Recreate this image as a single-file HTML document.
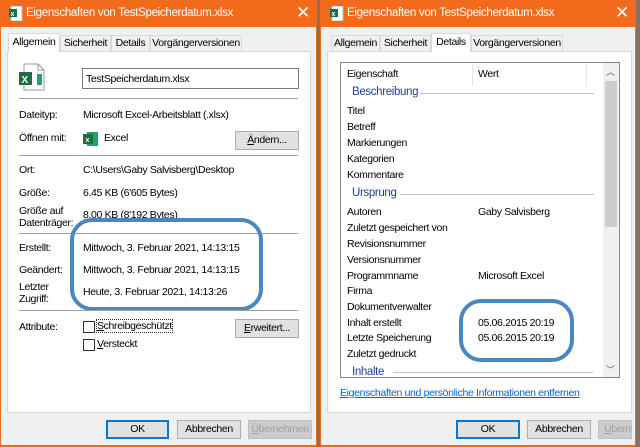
<!DOCTYPE html>
<html><head><meta charset="utf-8"><style>
*{margin:0;padding:0;box-sizing:border-box}
body{width:640px;height:447px;overflow:hidden;background:#8a7060;font-family:"Liberation Sans",sans-serif;font-size:10.5px;letter-spacing:-0.35px;color:#000;position:relative}
.a{position:absolute;white-space:nowrap}
.dlg{position:absolute;top:0;height:447px;background:#f0f0f0;border:1px solid #ef6a1c;border-top:none;border-bottom:2px solid #ef6a1c}
.title{position:absolute;left:-1px;right:-1px;top:0;height:27px;background:#f26b1d;color:#fff;font-size:11.5px;letter-spacing:-0.3px}
.panel{position:absolute;background:#fff;border:1px solid #d9d9d9}
.tab{position:absolute;top:35px;height:16px;background:#f0f0f0;border:1px solid #d9d9d9;border-bottom:none;text-align:center;line-height:15px}
.tab.sel{top:33px;height:19px;background:#fff;z-index:2;line-height:17px}
.btn{position:absolute;height:19px;background:#e1e1e1;border:1px solid #adadad;text-align:center;line-height:17px}
.btn.def{border:2px solid #0078d7;line-height:15px}
.btn.dis{color:#a0a0a0;background:#ccc;border-color:#bfbfbf}
.sep{position:absolute;height:1px;background:#a0a0a0}
.cb{position:absolute;width:12px;height:12px;border:1px solid #333;background:#fff}
.ring{position:absolute;border:4px solid #4a86c0;border-radius:22px}
.grp{color:#1e3f9b;font-size:11.5px}
.gl{position:absolute;height:1px;background:#b8c4dc}
</style></head><body>

<div class="dlg" style="left:0;width:317px">
 <div class="title">
  <svg class="a" style="left:9px;top:6px" width="14" height="15"><rect x="2" y="0" width="11" height="15" fill="#fff" stroke="#bbb"/><rect x="0" y="3" width="8" height="8" fill="#1d6f42"/><text x="1.5" y="10" font-size="7" fill="#fff" font-family="Liberation Sans" font-weight="bold">x</text></svg>
  <span class="a" style="left:26px;top:7px">Eigenschaften von TestSpeicherdatum.xlsx</span>
  <span class="a" style="left:296px;top:3px;font-size:17px">✕</span>
 </div>
 <div class="tab sel" style="left:7px;width:52px">Allgemein</div>
 <div class="tab" style="left:59px;width:51px">Sicherheit</div>
 <div class="tab" style="left:110px;width:39px">Details</div>
 <div class="tab" style="left:149px;width:92px">Vorgängerversionen</div>
 <div class="panel" style="left:6px;top:51px;width:304px;height:362px"></div>
</div>
<svg class="a" style="left:18px;top:63px" width="28" height="28"><path d="M6 1h14l6 6v20H6z" fill="#fff" stroke="#999"/><path d="M20 1v6h6" fill="none" stroke="#999"/><rect x="19" y="11" width="5" height="11" fill="#21a366"/><rect x="1" y="9" width="13" height="13" fill="#1d6f42"/><text x="3.5" y="20" font-size="10" fill="#fff" font-weight="bold" font-family="Liberation Sans">X</text></svg>
<div class="a" style="left:82px;top:68px;width:217px;height:21px;border:1px solid #7a7a7a;background:#fff;padding:4px 3px">TestSpeicherdatum.xlsx</div>
<div class="sep" style="left:19px;top:98px;width:279px"></div>
<span class="a" style="left:19px;top:109px">Dateityp:</span><span class="a" style="left:83px;top:109px">Microsoft Excel-Arbeitsblatt (.xlsx)</span>
<span class="a" style="left:19px;top:132px">Öffnen mit:</span>
<svg class="a" style="left:83px;top:131px" width="16" height="16"><rect x="4" y="1" width="11" height="14" fill="#21a366"/><rect x="0" y="3" width="10" height="10" fill="#1d6f42"/><text x="2.5" y="11" font-size="7" fill="#fff" font-weight="bold" font-family="Liberation Sans">x</text></svg>
<span class="a" style="left:104px;top:132px">Excel</span>
<div class="btn" style="left:235px;top:131px;width:64px"><u>Ä</u>ndern...</div>
<div class="sep" style="left:19px;top:155px;width:279px"></div>
<span class="a" style="left:19px;top:164px">Ort:</span><span class="a" style="left:83px;top:164px">C:\Users\Gaby Salvisberg\Desktop</span>
<span class="a" style="left:19px;top:187px">Größe:</span><span class="a" style="left:83px;top:187px">6.45 KB (6'605 Bytes)</span>
<span class="a" style="left:19px;top:205px;line-height:12px">Größe auf<br>Datenträger:</span><span class="a" style="left:83px;top:209px">8.00 KB (8'192 Bytes)</span>
<div class="sep" style="left:19px;top:233px;width:279px"></div>
<span class="a" style="left:19px;top:242px">Erstellt:</span><span class="a" style="left:83px;top:242px">Mittwoch, 3. Februar 2021, 14:13:15</span>
<span class="a" style="left:19px;top:264px">Geändert:</span><span class="a" style="left:83px;top:264px">Mittwoch, 3. Februar 2021, 14:13:15</span>
<span class="a" style="left:19px;top:281px;line-height:12px">Letzter<br>Zugriff:</span><span class="a" style="left:83px;top:286px">Heute, 3. Februar 2021, 14:13:26</span>
<div class="ring" style="left:70px;top:218px;width:193px;height:93px"></div>
<div class="sep" style="left:19px;top:310px;width:279px"></div>
<span class="a" style="left:19px;top:321px">Attribute:</span>
<div class="cb" style="left:83px;top:321px"></div><span class="a" style="left:97px;top:320px;outline:1px dotted #333"><u>S</u>chreibgeschützt</span>
<div class="cb" style="left:83px;top:339px"></div><span class="a" style="left:97px;top:338px"><u>V</u>ersteckt</span>
<div class="btn" style="left:235px;top:319px;width:64px"><u>E</u>rweitert...</div>
<div class="btn def" style="left:106px;top:420px;width:63px">OK</div>
<div class="btn" style="left:177px;top:420px;width:64px">Abbrechen</div>
<div class="btn dis" style="left:248px;top:420px;width:64px"><u>Ü</u>bernehmen</div>

<div class="dlg" style="left:320px;width:316px">
 <div class="title">
  <svg class="a" style="left:10px;top:6px" width="14" height="15"><rect x="2" y="0" width="11" height="15" fill="#fff" stroke="#bbb"/><rect x="0" y="3" width="8" height="8" fill="#1d6f42"/><text x="1.5" y="10" font-size="7" fill="#fff" font-family="Liberation Sans" font-weight="bold">x</text></svg>
  <span class="a" style="left:27px;top:7px">Eigenschaften von TestSpeicherdatum.xlsx</span>
  <span class="a" style="left:295px;top:3px;font-size:17px">✕</span>
 </div>
 <div class="tab" style="left:10px;width:49px">Allgemein</div>
 <div class="tab" style="left:59px;width:51px">Sicherheit</div>
 <div class="tab sel" style="left:110px;width:40px">Details</div>
 <div class="tab" style="left:150px;width:92px">Vorgängerversionen</div>
 <div class="panel" style="left:6px;top:51px;width:305px;height:362px"></div>
</div>
<div class="a" style="left:340px;top:62px;width:280px;height:316px;border:1px solid #828790;background:#fff;overflow:hidden">
 <div class="a" style="left:131px;top:1px;width:1px;height:22px;background:#e5e5e5"></div>
 <div class="a" style="left:245px;top:1px;width:1px;height:22px;background:#e5e5e5"></div>
 <div class="a" style="left:262px;top:0;width:16px;height:314px;background:#f0f0f0"></div>
 <div class="a" style="left:264px;top:18px;width:12px;height:146px;background:#cdcdcd"></div>
 <span class="a" style="left:265px;top:2px;font-size:9px;color:#555">︿</span>
 <span class="a" style="left:265px;top:300px;font-size:9px;color:#555">﹀</span>
</div>
<span class="a" style="left:347px;top:68px">Eigenschaft</span><span class="a" style="left:478px;top:68px">Wert</span>
<span class="a grp" style="left:352px;top:86px">Beschreibung</span><div class="gl" style="left:420px;top:93px;width:174px"></div>
<span class="a" style="left:347px;top:105px">Titel</span>
<span class="a" style="left:347px;top:121px">Betreff</span>
<span class="a" style="left:347px;top:137px">Markierungen</span>
<span class="a" style="left:347px;top:153px">Kategorien</span>
<span class="a" style="left:347px;top:169px">Kommentare</span>
<span class="a grp" style="left:352px;top:187px">Ursprung</span><div class="gl" style="left:400px;top:194px;width:194px"></div>
<span class="a" style="left:347px;top:206px">Autoren</span><span class="a" style="left:478px;top:206px">Gaby Salvisberg</span>
<span class="a" style="left:347px;top:222px">Zuletzt gespeichert von</span>
<span class="a" style="left:347px;top:238px">Revisionsnummer</span>
<span class="a" style="left:347px;top:254px">Versionsnummer</span>
<span class="a" style="left:347px;top:270px">Programmname</span><span class="a" style="left:478px;top:270px">Microsoft Excel</span>
<span class="a" style="left:347px;top:285px">Firma</span>
<span class="a" style="left:347px;top:301px">Dokumentverwalter</span>
<span class="a" style="left:347px;top:317px">Inhalt erstellt</span><span class="a" style="left:478px;top:317px">05.06.2015 20:19</span>
<span class="a" style="left:347px;top:332px">Letzte Speicherung</span><span class="a" style="left:478px;top:332px">05.06.2015 20:19</span>
<span class="a" style="left:347px;top:348px">Zuletzt gedruckt</span>
<div class="a" style="left:341px;top:365px;width:262px;height:12px;overflow:hidden"><span class="a grp" style="left:11px;top:1px">Inhalte</span><div class="gl" style="left:52px;top:7px;width:200px"></div></div>
<div class="ring" style="left:459px;top:299px;width:115px;height:63px"></div>
<span class="a" style="left:340px;top:387px;color:#0066cc;text-decoration:underline">Eigenschaften und persönliche Informationen entfernen</span>
<div class="btn def" style="left:456px;top:420px;width:64px">OK</div>
<div class="btn" style="left:527px;top:420px;width:64px">Abbrechen</div>
<div class="btn dis" style="left:598px;top:420px;width:34px;overflow:hidden;text-align:left;padding-left:5px"><u>Ü</u>bernehmen</div>
</body></html>
